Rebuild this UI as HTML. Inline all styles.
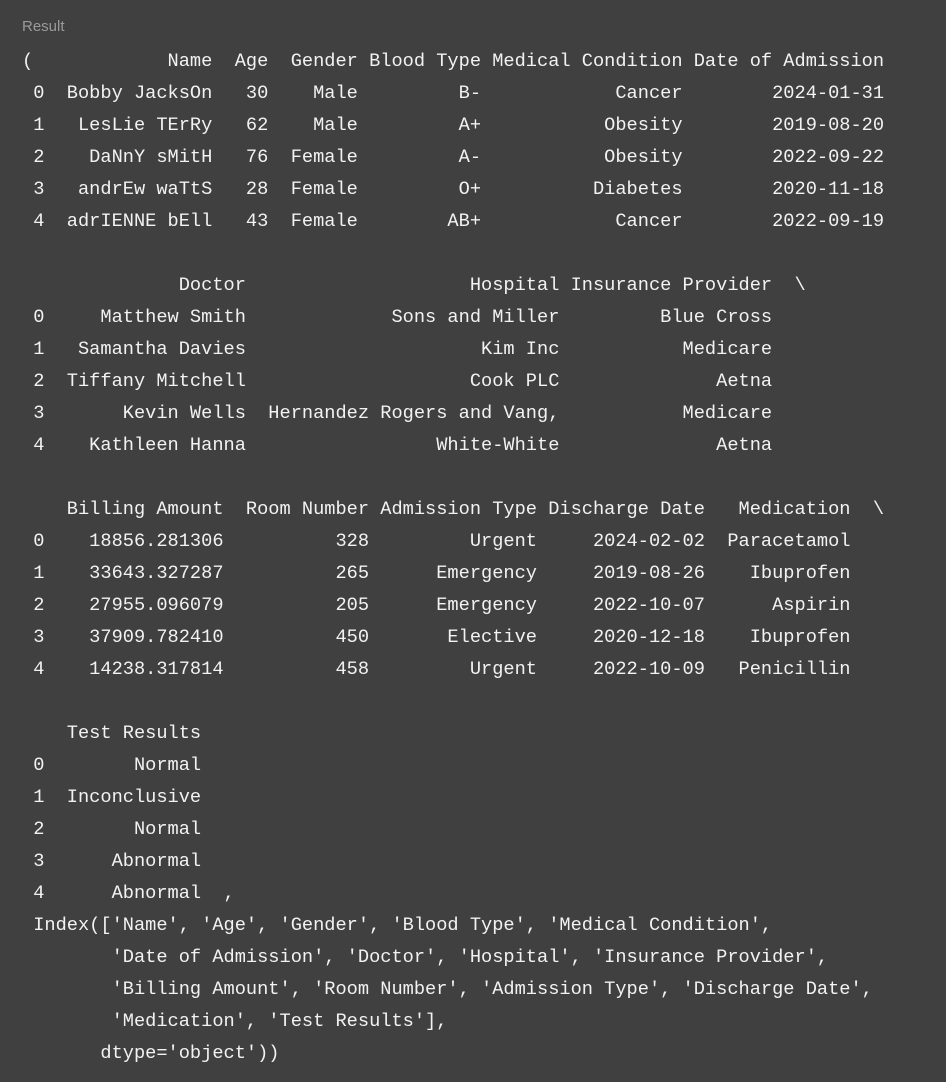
<!DOCTYPE html>
<html><head><meta charset="utf-8"><style>
html,body{margin:0;padding:0;background:#404040;width:946px;height:1082px;overflow:hidden}
.lbl{position:absolute;left:22px;top:18px;font:15px "Liberation Sans",sans-serif;color:#9a9a9a}
pre{position:absolute;left:22px;top:45px;margin:0;font-family:"Liberation Mono",monospace;font-size:18.67px;line-height:32px;color:#f2f2f2}
</style></head><body>
<div class="lbl">Result</div>
<pre>(            Name  Age  Gender Blood Type Medical Condition Date of Admission
 0  Bobby JacksOn   30    Male         B-            Cancer        2024-01-31
 1   LesLie TErRy   62    Male         A+           Obesity        2019-08-20
 2    DaNnY sMitH   76  Female         A-           Obesity        2022-09-22
 3   andrEw waTtS   28  Female         O+          Diabetes        2020-11-18
 4  adrIENNE bEll   43  Female        AB+            Cancer        2022-09-19

              Doctor                    Hospital Insurance Provider  \
 0     Matthew Smith             Sons and Miller         Blue Cross
 1   Samantha Davies                     Kim Inc           Medicare
 2  Tiffany Mitchell                    Cook PLC              Aetna
 3       Kevin Wells  Hernandez Rogers and Vang,           Medicare
 4    Kathleen Hanna                 White-White              Aetna

    Billing Amount  Room Number Admission Type Discharge Date   Medication  \
 0    18856.281306          328         Urgent     2024-02-02  Paracetamol
 1    33643.327287          265      Emergency     2019-08-26    Ibuprofen
 2    27955.096079          205      Emergency     2022-10-07      Aspirin
 3    37909.782410          450       Elective     2020-12-18    Ibuprofen
 4    14238.317814          458         Urgent     2022-10-09   Penicillin

    Test Results
 0        Normal
 1  Inconclusive
 2        Normal
 3      Abnormal
 4      Abnormal  ,
 Index(['Name', 'Age', 'Gender', 'Blood Type', 'Medical Condition',
        'Date of Admission', 'Doctor', 'Hospital', 'Insurance Provider',
        'Billing Amount', 'Room Number', 'Admission Type', 'Discharge Date',
        'Medication', 'Test Results'],
       dtype='object'))</pre>
</body></html>
